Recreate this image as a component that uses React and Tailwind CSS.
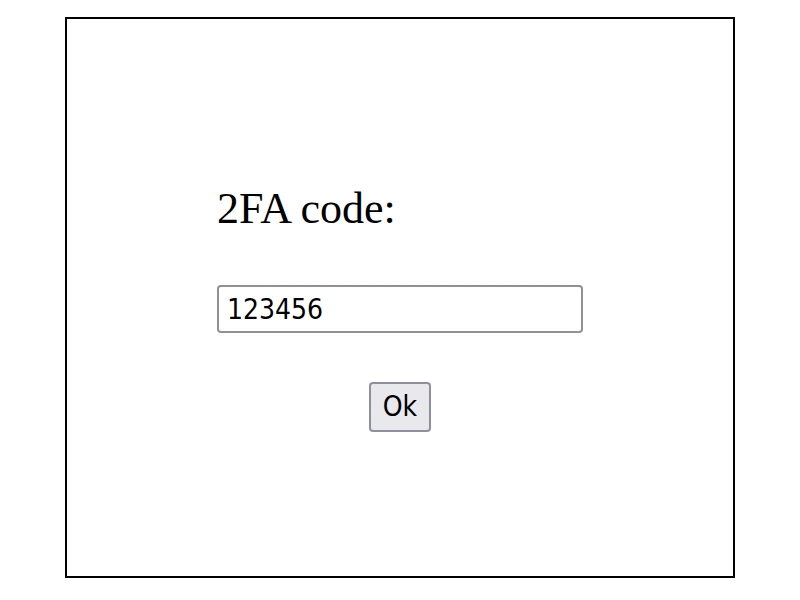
export default function App() {
  return (
    <div className="w-[800px] h-[600px] bg-white">
      <div className="mx-auto mt-[17px] w-[670px] h-[561px] border-2 border-black flex flex-col items-center pt-[166px]">
        <div className="w-[366px]">
          <div
            className="text-[44px] leading-[48px] text-black"
            style={{ fontFamily: '"Liberation Serif", "Times New Roman", serif' }}
          >
            2FA code:
          </div>
          <input
            type="text"
            defaultValue="123456"
            className="mt-[52px] block w-[366px] h-[48px] border-2 border-[#8f8f9d] rounded-[4px] px-[8px] text-[28px] text-black bg-white outline-none"
            style={{ fontFamily: '"DejaVu Sans Condensed", "DejaVu Sans", sans-serif', fontStretch: 'condensed' }}
          />
        </div>
        <button
          className="mt-[49px] w-[62px] h-[50px] border-2 border-[#8f8f9d] rounded-[4px] bg-[#e9e9ed] text-[28px] text-black flex items-center justify-center"
          style={{ fontFamily: '"DejaVu Sans Condensed", "DejaVu Sans", sans-serif', fontStretch: 'condensed' }}
        >
          Ok
        </button>
      </div>
    </div>
  );
}
